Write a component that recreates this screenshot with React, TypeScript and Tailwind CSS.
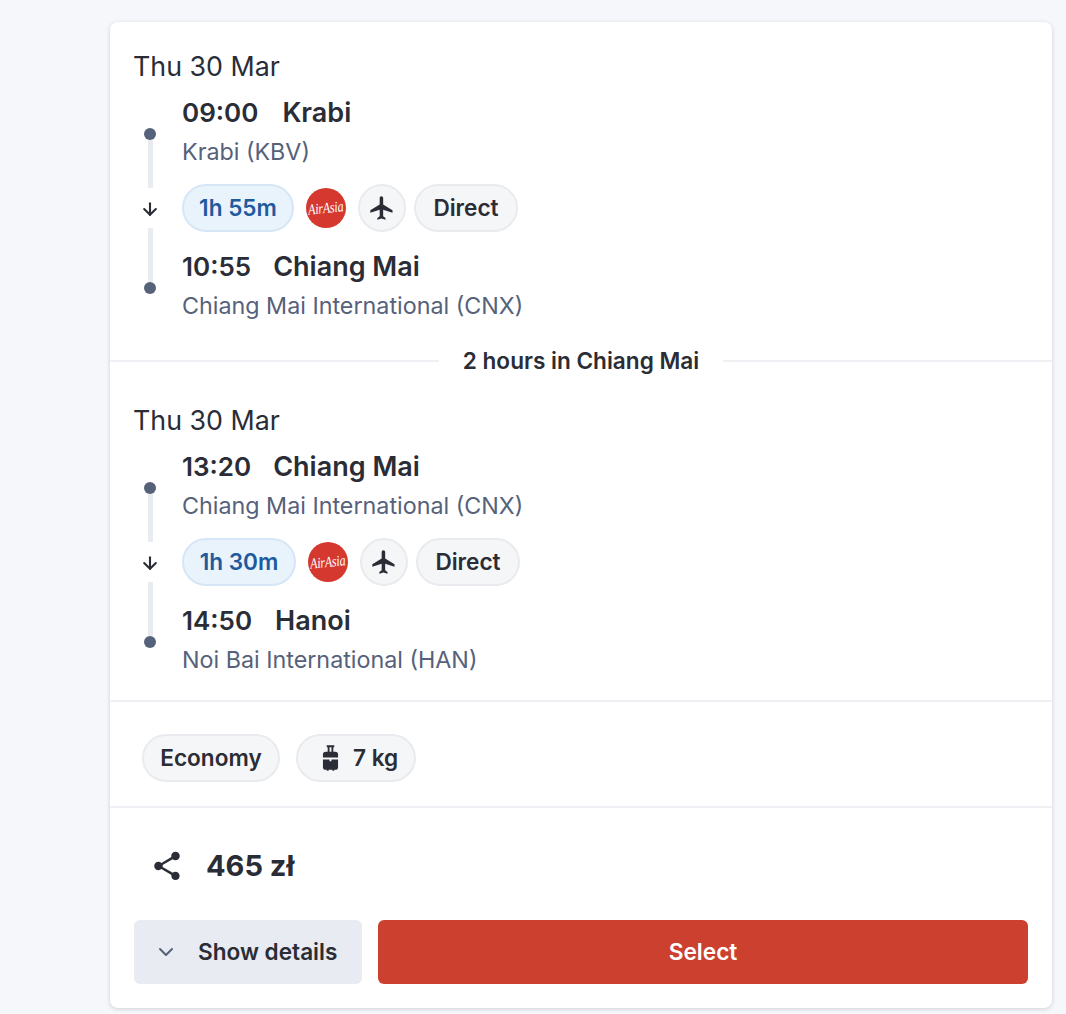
import React from 'react'
import { ArrowDown, ChevronDown } from 'lucide-react'
import { MdFlight, MdShare } from 'react-icons/md'

const font = "font-['Inter','Noto_Sans',sans-serif]"

function AirAsiaLogo() {
  return (
    <div className="w-10 h-10 rounded-full bg-[#d5382f] flex items-center justify-center overflow-hidden">
      <span className="text-white text-[12px] italic font-['Liberation_Serif',serif] -rotate-6 scale-y-125 whitespace-nowrap tracking-[-0.2px]">AirAsia</span>
    </div>
  )
}

function Pill({ children, className = '' }: { children: React.ReactNode; className?: string }) {
  return (
    <div className={`h-12 rounded-full border-2 border-[#e9ebef] bg-[#f5f6f8] flex items-center justify-center text-[22.6px] font-semibold text-[#2a2d36] ${className}`}>
      {children}
    </div>
  )
}

function Timeline() {
  return (
    <div className="w-8 mr-4 flex flex-col items-center pt-[31px] shrink-0">
      <div className="w-3 h-3 rounded-full bg-[#56617a]" />
      <div className="w-[5px] h-12 bg-[#e8ebf0]" />
      <ArrowDown size={20} strokeWidth={2.5} className="text-[#2a2d36] mt-[11px] mb-[9px]" />
      <div className="w-[5px] h-[54px] bg-[#e8ebf0]" />
      <div className="w-3 h-3 rounded-full bg-[#56617a]" />
    </div>
  )
}

function TimeRow({ time, city, cityClass, className = '' }: { time: string; city: string; cityClass: string; className?: string }) {
  return (
    <div className={`h-8 leading-[32px] font-semibold text-[#2a2d36] whitespace-nowrap ${className}`}>
      <span className="text-[26px]">{time}</span>
      <span className={`text-[27px] ${cityClass}`}>{city}</span>
    </div>
  )
}

type LegProps = {
  from: string
  fromCity: string
  fromGap: string
  fromPlace: string
  to: string
  toCity: string
  toGap: string
  toPlace: string
  dur: string
  width: string
}

function Leg({ from, fromCity, fromGap, fromPlace, to, toCity, toGap, toPlace, dur, width }: LegProps) {
  return (
    <div>
      <div className="text-[26.8px] leading-[32px] text-[#2a2d36] mb-[15px] -ml-px">Thu 30 Mar</div>
      <div className="flex">
        <Timeline />
        <div>
          <TimeRow time={from} city={fromCity} cityClass={fromGap} />
          <div className="text-[23.3px] leading-[32px] text-[#56617a] mt-[7px]">{fromPlace}</div>
          <div className="flex items-center mt-4">
            <div className={`h-12 rounded-full border-2 border-[#d6e6f6] bg-[#e9f3fc] flex items-center justify-center text-[22.6px] font-semibold text-[#1f5a9c] mr-3 ${width}`}>{dur}</div>
            <div className="mr-3"><AirAsiaLogo /></div>
            <Pill className="w-12 mr-2"><MdFlight size={28} /></Pill>
            <Pill className="w-[104px]">Direct</Pill>
          </div>
          <TimeRow time={to} city={toCity} cityClass={toGap} className="mt-[19px]" />
          <div className="text-[23.3px] leading-[32px] text-[#56617a] mt-[7px]">{toPlace}</div>
        </div>
      </div>
    </div>
  )
}

export default function App() {
  return (
    <div className={`min-h-[1014px] bg-[#f5f7fa] pt-[22px] pl-[110px] pr-[14px] ${font}`}>
      <div className="h-[986px] bg-white rounded-lg shadow-[0_1px_4px_rgba(30,40,60,0.18)] flex flex-col">
        <div className="h-[338px] px-6 pt-7">
          <Leg from="09:00" fromCity="Krabi" fromGap="ml-6" fromPlace="Krabi (KBV)" to="10:55" toCity="Chiang Mai" toGap="ml-[22px]" toPlace="Chiang Mai International (CNX)" dur="1h 55m" width="w-[112px]" />
        </div>
        <div className="relative border-t-2 border-[#eef0f3]">
          <div className="absolute left-0 right-0 -top-[15px] flex justify-center">
            <span className="bg-white px-6 text-[22.6px] leading-[28px] font-semibold text-[#2a2d36]">2 hours in Chiang Mai</span>
          </div>
        </div>
        <div className="h-[340px] px-6 pt-[42px] border-b-2 border-[#eef0f3]">
          <Leg from="13:20" fromCity="Chiang Mai" fromGap="ml-[22px]" fromPlace="Chiang Mai International (CNX)" to="14:50" toCity="Hanoi" toGap="ml-[23px]" toPlace="Noi Bai International (HAN)" dur="1h 30m" width="w-[114px]" />
        </div>
        <div className="h-[106px] px-8 pt-2 flex items-center gap-4 border-b-2 border-[#eef0f3]">
          <Pill className="w-[138px]">Economy</Pill>
          <Pill className="w-[120px] justify-start pl-6 gap-[14px]">
            <svg width="17" height="26" viewBox="0 0 18 27" fill="currentColor">
              <path d="M5 0h8v2h-1v5h2a3 3 0 0 1 3 3v3H1v-3a3 3 0 0 1 3-3h2V2H5V0zm3 2v5h2V2H8zM1 15h7v2h2v-2h7v8a3 3 0 0 1-3 3h-1v1h-2v-1H7v1H5v-1H4a3 3 0 0 1-3-3v-8z" />
            </svg>
            7 kg
          </Pill>
        </div>
        <div className="px-6 flex-1 flex flex-col">
          <div className="flex items-center h-[112px] pl-4 pt-[3px] text-[#2a2d36]">
            <MdShare size={34} />
            <span className="ml-[22px] text-[29px] font-bold">465 zł</span>
          </div>
          <div className="flex gap-4">
            <button className="w-[228px] h-16 bg-[#e8ebf1] rounded-md flex items-center pl-5 text-[22.6px] font-semibold text-[#2a2d36]">
              <ChevronDown size={24} className="text-[#56617a]" />
              <span className="ml-5">Show details</span>
            </button>
            <button className="flex-1 h-16 bg-[#cc4030] rounded-md text-white text-[22.7px] font-semibold">Select</button>
          </div>
        </div>
      </div>
    </div>
  )
}
